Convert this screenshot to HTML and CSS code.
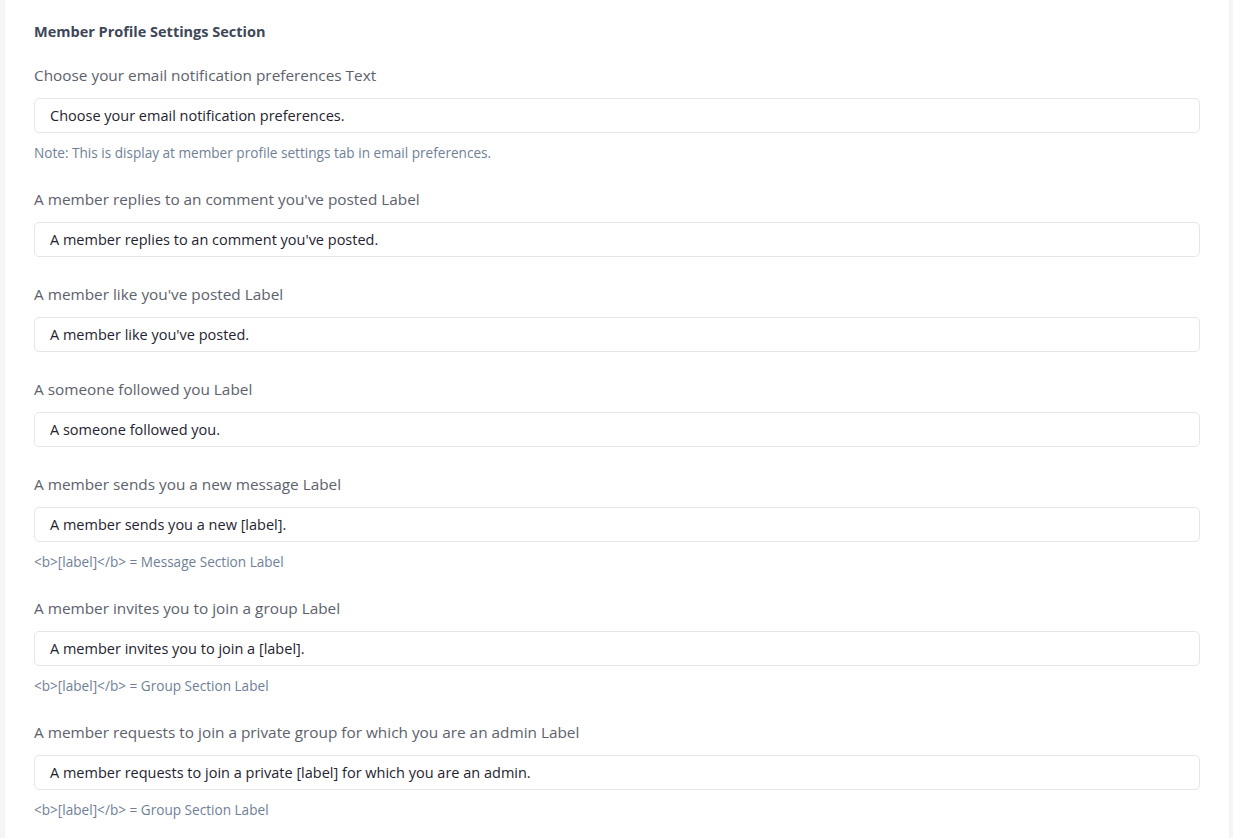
FILE: index.html
```html
<!DOCTYPE html>
<html lang="en">
<head>
    <meta charset="UTF-8">
    <meta name="viewport" content="width=device-width, initial-scale=1.0">
    <title>Member Profile Settings</title>
    <link rel="stylesheet" href="styles.css">
</head>
<body>

    <div class="settings-panel">
        <h3 class="section-title">Member Profile Settings Section</h3>

        <!-- Email preferences text -->
        <div class="field">
            <label class="field-label" for="pref-text">Choose your email notification preferences Text</label>
            <input type="text" id="pref-text" class="field-input" value="Choose your email notification preferences.">
            <p class="field-note">Note: This is display at member profile settings tab in email preferences.</p>
        </div>

        <div class="field">
            <label class="field-label" for="reply-label">A member replies to an comment you've posted Label</label>
            <input type="text" id="reply-label" class="field-input" value="A member replies to an comment you've posted.">
        </div>

        <div class="field">
            <label class="field-label" for="like-label">A member like you've posted Label</label>
            <input type="text" id="like-label" class="field-input" value="A member like you've posted.">
        </div>

        <div class="field">
            <label class="field-label" for="follow-label">A someone followed you Label</label>
            <input type="text" id="follow-label" class="field-input" value="A someone followed you.">
        </div>

        <div class="field">
            <label class="field-label" for="message-label">A member sends you a new message Label</label>
            <input type="text" id="message-label" class="field-input" value="A member sends you a new [label].">
            <p class="field-note">&lt;b&gt;[label]&lt;/b&gt; = Message Section Label</p>
        </div>

        <div class="field">
            <label class="field-label" for="invite-label">A member invites you to join a group Label</label>
            <input type="text" id="invite-label" class="field-input" value="A member invites you to join a [label].">
            <p class="field-note">&lt;b&gt;[label]&lt;/b&gt; = Group Section Label</p>
        </div>

        <div class="field">
            <label class="field-label" for="request-label">A member requests to join a private group for which you are an admin Label</label>
            <input type="text" id="request-label" class="field-input" value="A member requests to join a private [label] for which you are an admin.">
            <p class="field-note">&lt;b&gt;[label]&lt;/b&gt; = Group Section Label</p>
        </div>
    </div>

</body>
</html>
```

FILE: styles.css
```css
/* Reset */
* {
    margin: 0;
    padding: 0;
    box-sizing: border-box;
}

body {
    font-family: 'Open Sans', 'Liberation Sans', sans-serif;
    background-color: #f4f5f7;
    color: #333;
    padding-left: 5px;
}

.settings-panel {
    background-color: #ffffff;
    width: 1224px;
    min-height: 100vh;
    padding: 22px 29px 40px;
}

.section-title {
    font-size: 14.5px;
    font-weight: 700;
    line-height: 20px;
    color: #3d4758;
    margin-bottom: 23px;
}

.field {
    margin-bottom: 27px;
}

.field-label {
    display: block;
    font-size: 15.35px;
    line-height: 21px;
    color: #5c616c;
    margin-bottom: 12px;
}

.field-input {
    display: block;
    width: 100%;
    height: 35px;
    padding: 0 15px;
    border: 1px solid #e4e6ea;
    border-radius: 5px;
    background-color: #fff;
    font-family: inherit;
    font-size: 14.5px;
    color: #1f2330;
}

.field-note {
    font-size: 13.6px;
    line-height: 18px;
    color: #6f7f97;
    margin-top: 11px;
    margin-bottom: 3px;
}
```
